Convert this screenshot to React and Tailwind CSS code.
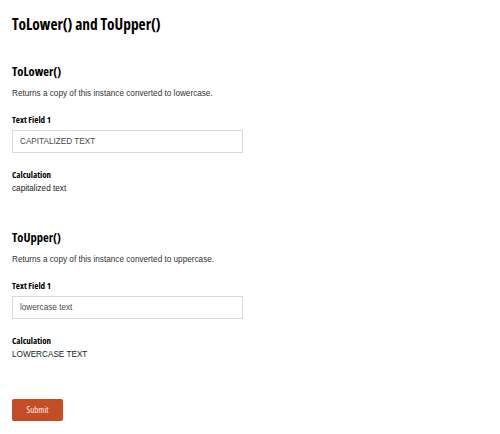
const heading = { fontFamily: '"Open Sans", "Liberation Sans Narrow", sans-serif', fontStretch: 'condensed' };

function Section({ title, description, value, result, top }) {
  return (
    <div>
      <h2 className={`text-[12.5px] font-bold text-black leading-[20px] ${top}`} style={heading}>
        {title}
      </h2>
      <p className="text-[8.2px] leading-[10px] text-[#333] mt-[7px] font-['Liberation_Sans',Arial,sans-serif]">
        {description}
      </p>
      <div className="mt-[15px]">
        <label className="block text-[9px] font-bold text-black leading-[12px]" style={heading}>
          Text Field 1
        </label>
        <input
          readOnly
          value={value}
          className="mt-[3px] w-[231px] h-[23px] border border-[#d8d8d8] bg-white px-[7px] text-[8.2px] text-[#4a4a4a] outline-none font-['Liberation_Sans',Arial,sans-serif]"
        />
      </div>
      <div className="mt-[16px]">
        <div className="text-[9px] font-bold text-black leading-[12px]" style={heading}>
          Calculation
        </div>
        <div className="mt-[3px] text-[8.2px] leading-[10px] text-[#222] font-['Liberation_Sans',Arial,sans-serif]">
          {result}
        </div>
      </div>
    </div>
  );
}

export default function App() {
  return (
    <div className="w-[500px] h-[434px] bg-white px-[12px] pt-[14px] overflow-hidden">
      <h1 className="text-[15.4px] font-bold text-black leading-[22px]" style={heading}>
        ToLower() and ToUpper()
      </h1>
      <Section
        top="mt-[26px]"
        title="ToLower()"
        description="Returns a copy of this instance converted to lowercase."
        value="CAPITALIZED TEXT"
        result="capitalized text"
      />
      <Section
        top="mt-[34px]"
        title="ToUpper()"
        description="Returns a copy of this instance converted to uppercase."
        value="lowercase text"
        result="LOWERCASE TEXT"
      />
      <button
        className="mt-[39px] w-[51px] h-[22px] rounded-[2px] bg-[#c44d25] text-[9px] text-[#fbeae4]"
        style={heading}
      >
        Submit
      </button>
    </div>
  );
}
